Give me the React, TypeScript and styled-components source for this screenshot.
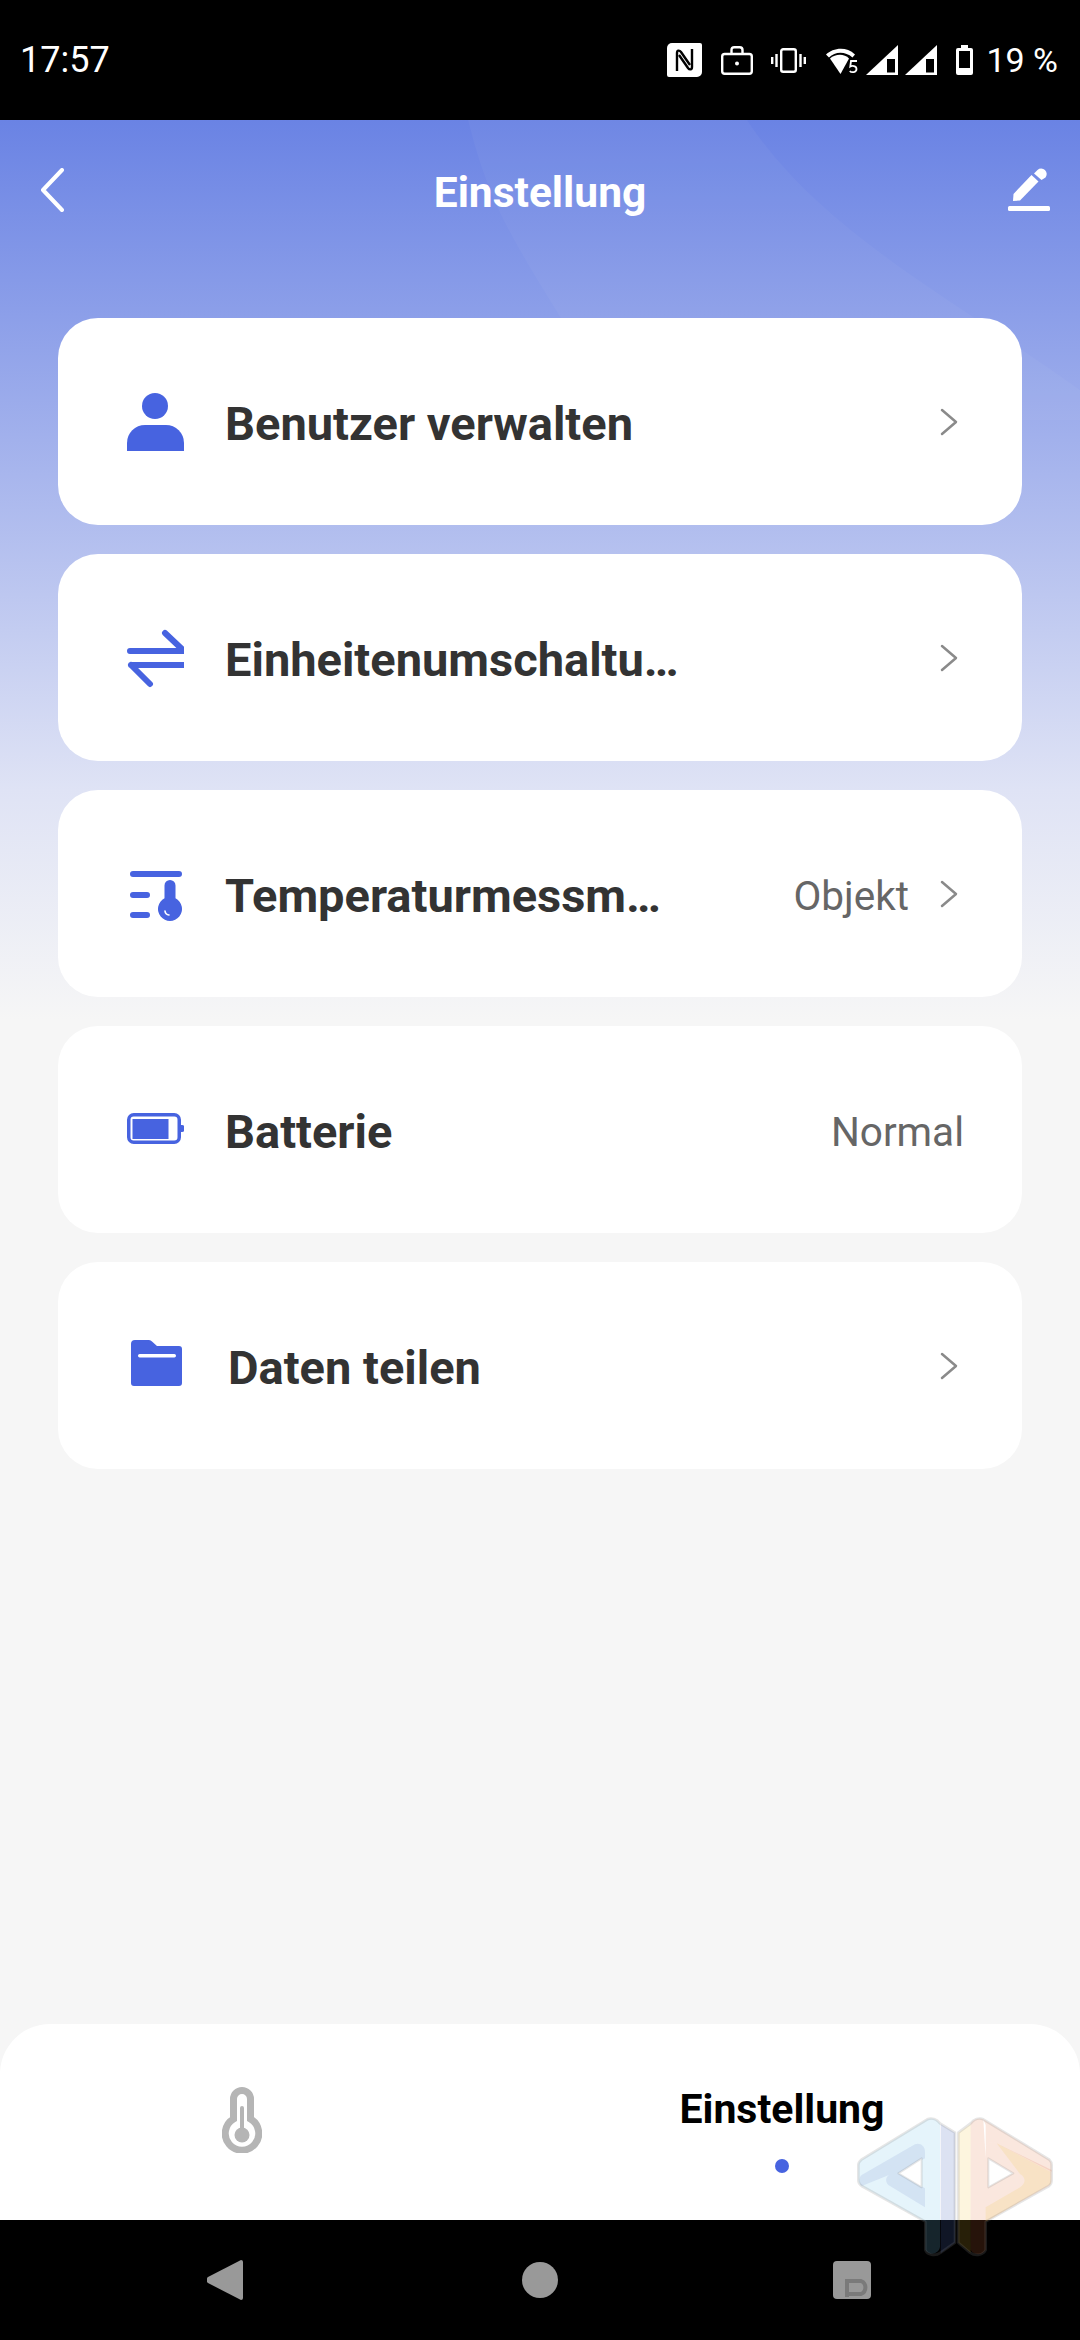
import React from "react"
import styled, { createGlobalStyle } from "styled-components"

const ACCENT = "#4763e0"

const GlobalStyle = createGlobalStyle`
  html, body {
    margin: 0;
    padding: 0;
    background: #000;
    font-family: Roboto, "Liberation Sans", sans-serif;
  }
`

type Row = {
  label: string
  icon: React.ReactNode
  value?: string
  chevron: boolean
  labelShift?: boolean
}

const PersonIcon = () => (
  <S.RowIcon viewBox="0 0 60 60">
    <circle cx="31" cy="14" r="13" fill={ACCENT} />
    <path d="M3 59V51A18 18 0 0 1 21 33H42A18 18 0 0 1 60 51V59Z" fill={ACCENT} />
  </S.RowIcon>
)

const SwitchIcon = () => (
  <S.RowIcon viewBox="0 0 60 60">
    <path
      d="M6 23H60L41 5M7 37H61M7 37L26 56"
      fill="none"
      stroke={ACCENT}
      strokeWidth="6"
      strokeLinecap="round"
      strokeLinejoin="round"
    />
  </S.RowIcon>
)

const ThermoListIcon = () => (
  <S.RowIcon viewBox="0 0 60 60">
    <path d="M9 10H55M9 31H23M9 51H23" stroke={ACCENT} strokeWidth="6" strokeLinecap="round" />
    <path d="M40.500 21.500a5.500 5.500 0 0 1 11 0V34.300a12 12 0 1 1 -11 0Z" fill={ACCENT} />
    <path d="M41 47a4.500 4.500 0 0 0 4 4" fill="none" stroke="#fff" strokeWidth="1.600" strokeLinecap="round" />
  </S.RowIcon>
)

const BatteryIcon = () => (
  <S.RowIcon viewBox="0 0 60 60">
    <rect x="4.750" y="14.750" width="50.500" height="27.500" rx="5" fill="none" stroke={ACCENT} strokeWidth="3.500" />
    <rect x="8.500" y="19" width="36" height="20" fill={ACCENT} />
    <path d="M57 25h1a2.500 2.500 0 0 1 2.500 2.500v2a2.500 2.500 0 0 1 -2.500 2.500h-1Z" fill={ACCENT} />
  </S.RowIcon>
)

const FolderIcon = () => (
  <S.RowIcon viewBox="0 0 60 60">
    <path
      d="M7 8a4 4 0 0 1 4-4H25a4 4 0 0 1 3 1.500L33 10H55a3 3 0 0 1 3 3V47a3 3 0 0 1 -3 3H10a3 3 0 0 1 -3-3Z"
      fill={ACCENT}
    />
    <rect x="14" y="18" width="38" height="3.500" rx="1.700" fill="#fff" />
  </S.RowIcon>
)

const rows: Row[] = [
  { label: "Benutzer verwalten", icon: <PersonIcon />, chevron: true },
  { label: "Einheitenumschaltu…", icon: <SwitchIcon />, chevron: true },
  { label: "Temperaturmessm…", icon: <ThermoListIcon />, value: "Objekt", chevron: true },
  { label: "Batterie", icon: <BatteryIcon />, value: "Normal", chevron: false },
  { label: "Daten teilen", icon: <FolderIcon />, chevron: true, labelShift: true },
]

const StatusIcons: React.FC = () => (
  <S.StatusRight>
    <S.StatusSvg width="35" height="34" viewBox="0 0 35 34" $gap={0}>
      <path d="M5 0H33A2 2 0 0 1 35 2V29A5 5 0 0 1 30 34H2A2 2 0 0 1 0 32V5A5 5 0 0 1 5 0Z" fill="#fff" />
      <path d="M10 28V10C10 7 12.500 7 14 9L23 22" fill="none" stroke="#000" strokeWidth="2.400" />
      <path d="M25 6V24C25 27 22.500 27 21 25L12 12" fill="none" stroke="#000" strokeWidth="2.400" />
    </S.StatusSvg>
    <S.StatusSvg width="32" height="29" viewBox="0 0 32 29" $gap={19}>
      <rect x="1.200" y="8" width="29.600" height="19.800" rx="2.500" fill="none" stroke="#fff" strokeWidth="2.400" />
      <path d="M10.500 8V4a2.800 2.800 0 0 1 2.800-2.800h5.400a2.800 2.800 0 0 1 2.800 2.800V8" fill="none" stroke="#fff" strokeWidth="2.400" />
      <circle cx="16" cy="17.500" r="2" fill="#fff" />
    </S.StatusSvg>
    <S.StatusSvg width="35" height="25" viewBox="0 0 35 25" $gap={18}>
      <rect x="10.200" y="1.200" width="14.600" height="22.600" rx="2" fill="none" stroke="#fff" strokeWidth="2.400" />
      <path d="M5.500 6V19M1.200 9V16M29.500 6V19M33.800 9V16" stroke="#fff" strokeWidth="2.400" />
    </S.StatusSvg>
    <S.StatusSvg width="33" height="29" viewBox="0 0 33 29" $gap={20}>
      <path d="M0 8.500C6.500 2.500 19.500 -0.500 29 8.500L26.500 11.500C19 5 9 5.500 3 11.500Z" fill="#fff" />
      <path d="M4 12.500C9.500 7.500 18.500 7.500 23 12.500L14.500 28Z" fill="#fff" />
      <path d="M31 15H25L24.300 20.500C26 19.500 30.500 19.800 30.500 23C30.500 26.500 25.500 27 23.800 25" fill="none" stroke="#fff" strokeWidth="1.800" />
    </S.StatusSvg>
    <S.StatusSvg width="32" height="30" viewBox="0 0 32 30" $gap={7}>
      <path d="M32 0V30H0Z" fill="#fff" />
      <path d="M21 14H29V27.500H21Z" fill="#000" />
    </S.StatusSvg>
    <S.StatusSvg width="32" height="30" viewBox="0 0 32 30" $gap={7}>
      <path d="M32 0V30H0Z" fill="#fff" />
      <path d="M21 14H29V27.500H21Z" fill="#000" />
    </S.StatusSvg>
    <S.StatusSvg width="17" height="30" viewBox="0 0 17 30" $gap={19}>
      <path d="M5 0H12V3H15A2 2 0 0 1 17 5V28A2 2 0 0 1 15 30H2A2 2 0 0 1 0 28V5A2 2 0 0 1 2 3H5Z" fill="#fff" />
      <rect x="3" y="6" width="11" height="21" fill="#000" />
      <rect x="3" y="23" width="11" height="4" fill="#fff" />
    </S.StatusSvg>
    <S.Clock $left={13} $size={34}>19 %</S.Clock>
  </S.StatusRight>
)

const Watermark: React.FC = () => (
  <S.WatermarkSvg viewBox="0 0 780 750" width="260" height="250">
    <g strokeLinejoin="round">
      {/* left half */}
      <path
        d="M322 88C335 82 350 88 360 100V470C358 490 330 500 316 480V395L125 288C118 283 115 278 115 270V225C115 218 118 214 124 209Z"
        fill="rgba(117,194,234,0.19)"
      />
      <path d="M362 102L405 128V458L362 490Z" fill="rgba(80,110,190,0.2)" />
      <path
        d="M125 255L285 163C300 157 315 168 315 185V205L235 250L315 295V352L205 285C195 275 197 262 207 255L125 288C118 283 115 262 125 255Z"
        fill="rgba(80,110,190,0.12)"
      />
      <path
        d="M322 88C335 82 350 88 360 100L405 128V458L362 488C345 500 322 495 316 480V395L125 288C118 283 115 278 115 270V225C115 218 118 214 124 209Z"
        fill="none"
        stroke="rgba(130,130,130,0.2)"
        strokeWidth="8"
      />
      <path d="M235 250L305 205V292Z" fill="#fff" stroke="rgba(130,130,130,0.2)" strokeWidth="6" />
      {/* right half */}
      <path
        d="M490 88C477 82 462 88 452 100V480C460 495 485 498 497 480V395L687 288C693 283 695 278 695 270V240L530 160C512 152 497 160 497 180V205Z"
        fill="rgba(225,110,60,0.17)"
      />
      <path d="M490 88L688 209C693 214 695 218 695 225V245L530 160C512 152 497 160 497 180V105Z" fill="rgba(225,110,60,0.17)" />
      <path d="M452 102L415 128V458L452 488Z" fill="rgba(240,195,50,0.16)" />
      <path
        d="M530 160L692 245V282L497 395V352L600 292C618 280 618 262 600 252Z"
        fill="rgba(240,195,50,0.14)"
      />
      <path
        d="M490 88C477 82 462 88 452 100L415 128V458L450 488C467 500 490 495 497 480V395L687 288C693 283 695 278 695 270V225C695 218 693 214 688 209Z"
        fill="none"
        stroke="rgba(130,130,130,0.2)"
        strokeWidth="8"
      />
      <path d="M505 205L580 250L505 292Z" fill="#fff" stroke="rgba(130,130,130,0.2)" strokeWidth="6" />
    </g>
  </S.WatermarkSvg>
)

export default function App() {
  return (
    <S.Page>
      <GlobalStyle />
      <S.StatusBar>
        <S.Clock>17:57</S.Clock>
        <StatusIcons />
      </S.StatusBar>

      <S.Content>
        <S.HeaderShade viewBox="0 0 1080 300" width="1080" height="300">
          <path d="M468 0C490 90 520 130 568 210L600 300H1080V270C940 170 820 110 747 0Z" fill="rgba(255,255,255,0.035)" />
        </S.HeaderShade>
        <S.Header>
          <S.BackIcon width="24" height="44" viewBox="0 0 24 44">
            <path d="M22 2L3 22L22 42" fill="none" stroke="#fff" strokeWidth="4" strokeLinecap="round" strokeLinejoin="round" />
          </S.BackIcon>
          <S.Title>Einstellung</S.Title>
          <S.PenIcon width="43" height="44" viewBox="0 0 43 44">
            <rect x="1" y="38" width="42" height="5" rx="1.500" fill="#fff" />
            <path d="M6 33L6.500 26L24.500 7L31.500 13.500L13 32.500Z" fill="#fff" />
            <path d="M27 5.500L30.500 2A5.500 5.500 0 0 1 38.500 9.500L34.500 12Z" fill="#fff" />
          </S.PenIcon>
        </S.Header>

        <S.List>
          {rows.map((r) => (
            <S.Card key={r.label}>
              {r.icon}
              <S.Label $shift={r.labelShift}>{r.label}</S.Label>
              {r.value && <S.Value $withChevron={r.chevron}>{r.value}</S.Value>}
              {r.chevron && (
                <S.Chevron width="18" height="28" viewBox="0 0 18 28">
                  <path d="M2 2L16 14L2 26" fill="none" stroke="#8a8a8a" strokeWidth="2.500" strokeLinecap="round" strokeLinejoin="round" />
                </S.Chevron>
              )}
            </S.Card>
          ))}
        </S.List>
      </S.Content>

      <S.TabBar>
        <S.ThermoTab>
          <svg width="40" height="66" viewBox="0 0 40 66">
            <path d="M11.500 12a8.500 8.500 0 0 1 17 0V32a16.750 16.750 0 1 1 -17 0Z" fill="none" stroke="#b5b5b5" strokeWidth="7" />
            <path d="M20 21V46" stroke="#b5b5b5" strokeWidth="4" strokeLinecap="round" />
            <circle cx="20" cy="48" r="7.500" fill="#b5b5b5" />
          </svg>
        </S.ThermoTab>
        <S.ActiveTab>
          <S.TabLabel>Einstellung</S.TabLabel>
          <S.TabDot />
        </S.ActiveTab>
      </S.TabBar>

      <S.NavBar>
        <svg width="36" height="42" viewBox="0 0 36 42">
          <path d="M34 1a2 2 0 0 1 2 2V39a2 2 0 0 1 -2 2L1 24a4 4 0 0 1 0-6Z" fill="#999" />
        </svg>
        <S.NavCircle />
        <S.NavSquare>
          <svg width="38" height="38" viewBox="0 0 38 38">
            <path d="M14 36V20H28A7 7 0 0 1 28 33H14" fill="none" stroke="#7a7a7a" strokeWidth="4" />
          </svg>
        </S.NavSquare>
      </S.NavBar>

      <Watermark />
    </S.Page>
  )
}

const S = {
  Page: styled.div`
    position: relative;
    display: flex;
    flex-direction: column;
    width: 1080px;
    height: 2340px;
    overflow: hidden;
    background: #f6f6f6;
  `,
  StatusBar: styled.div`
    display: flex;
    justify-content: space-between;
    align-items: center;
    flex: 0 0 120px;
    box-sizing: border-box;
    padding: 0 22px 0 20px;
    background: #000;
    color: #fff;
  `,
  Clock: styled.span<{ $left?: number; $size?: number }>`
    margin-left: ${(p) => p.$left ?? 0}px;
    font-size: ${(p) => p.$size ?? 36}px;
    line-height: 40px;
    white-space: nowrap;
  `,
  StatusRight: styled.div`
    display: flex;
    align-items: center;
  `,
  StatusSvg: styled.svg<{ $gap: number }>`
    flex: none;
    margin-left: ${(p) => p.$gap}px;
  `,
  Content: styled.div`
    position: relative;
    flex: 1;
    background: linear-gradient(180deg, #6a83e4 0, #dfe3f5 670px, #f6f6f6 900px);
  `,
  HeaderShade: styled.svg`
    position: absolute;
    top: 0;
    left: 0;
  `,
  Header: styled.div`
    position: relative;
    display: grid;
    grid-template-columns: 1fr auto 1fr;
    align-items: center;
    height: 140px;
    padding: 0 30px;
  `,
  BackIcon: styled.svg`
    justify-self: start;
    margin-left: 10px;
  `,
  PenIcon: styled.svg`
    justify-self: end;
  `,
  Title: styled.div`
    padding-top: 6px;
    color: #fff;
    font-size: 42.500px;
    font-weight: 700;
    line-height: 50px;
  `,
  List: styled.div`
    position: relative;
    display: flex;
    flex-direction: column;
    gap: 29px;
    padding: 58px 58px 0;
  `,
  Card: styled.div`
    display: flex;
    align-items: center;
    height: 207px;
    box-sizing: border-box;
    padding: 0 58px 0 66px;
    border-radius: 40px;
    background: #fff;
  `,
  RowIcon: styled.svg`
    flex: none;
    width: 60px;
    height: 60px;
  `,
  Label: styled.div<{ $shift?: boolean }>`
    flex: 1;
    margin-left: ${(p) => (p.$shift ? 44 : 41)}px;
    padding-top: 3px;
    color: #333;
    font-size: 47px;
    font-weight: 700;
    white-space: nowrap;
  `,
  Value: styled.div<{ $withChevron: boolean }>`
    margin-right: ${(p) => (p.$withChevron ? 31 : 0)}px;
    padding-top: 5px;
    color: #666;
    font-size: 40.500px;
  `,
  Chevron: styled.svg`
    flex: none;
    margin-right: 6px;
  `,
  TabBar: styled.div`
    display: grid;
    grid-template-columns: 484px 596px;
    flex: 0 0 196px;
    border-radius: 50px 50px 0 0;
    background: #fff;
  `,
  ThermoTab: styled.div`
    display: flex;
    justify-content: center;
    padding-top: 63px;
  `,
  ActiveTab: styled.div`
    display: flex;
    flex-direction: column;
    align-items: center;
    padding-top: 60px;
  `,
  TabLabel: styled.div`
    color: #000;
    font-size: 41px;
    font-weight: 700;
    line-height: 50px;
  `,
  TabDot: styled.div`
    width: 14px;
    height: 14px;
    margin-top: 25px;
    border-radius: 50%;
    background: ${ACCENT};
  `,
  NavBar: styled.div`
    display: flex;
    align-items: center;
    flex: 0 0 120px;
    box-sizing: border-box;
    padding-left: 207px;
    background: #000;
  `,
  NavCircle: styled.div`
    width: 36px;
    height: 36px;
    margin-left: 279px;
    border-radius: 50%;
    background: #999;
  `,
  NavSquare: styled.div`
    display: flex;
    width: 38px;
    height: 38px;
    margin-left: 275px;
    border-radius: 4px;
    background: #999;
  `,
  WatermarkSvg: styled.svg`
    position: absolute;
    left: 820px;
    top: 2090px;
  `,
}
